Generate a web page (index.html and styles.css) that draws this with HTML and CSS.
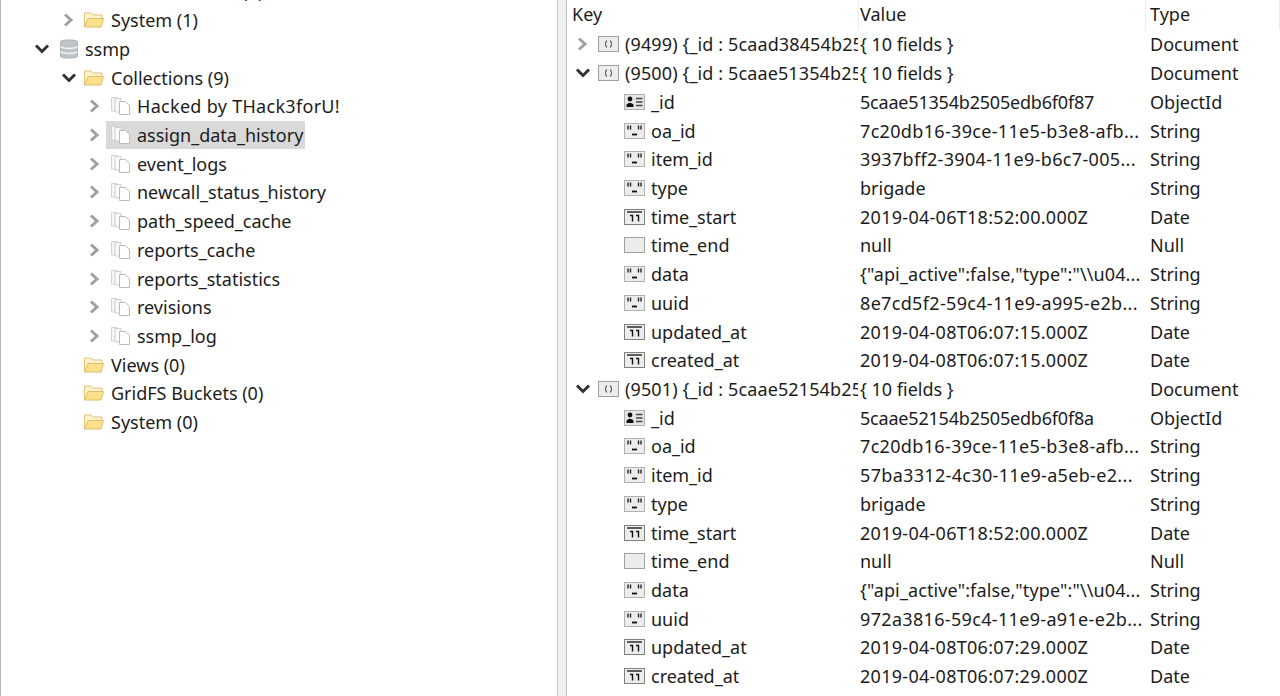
FILE: index.html
```html
<!doctype html>
<html>
<head>
    <meta charset="UTF-8">
    <title>ssmp - Collections</title>
    <link rel="stylesheet" href="styles.css">
</head>

<body>
    <svg class="defs" width="0" height="0">
        <symbol id="i-chev-r" viewBox="0 0 14 16"><path d="M3 2.500 9 8 3 13.500" fill="none" stroke="#a0a0a0" stroke-width="3"/></symbol>
        <symbol id="i-chev-d" viewBox="0 0 16 14"><path d="M2 3.500 8 9.500 14 3.500" fill="none" stroke="#333" stroke-width="3"/></symbol>
        <symbol id="i-folder" viewBox="0 0 22 18">
            <path d="M1.500 16V2H8L10 4H19V7" fill="#fdf3cc" stroke="#dfc27a"/>
            <path d="M1.500 16 5 7.500H20.500L18 16Z" fill="#fce08c" stroke="#e2be68"/>
        </symbol>
        <symbol id="i-db" viewBox="0 0 18 20">
            <path d="M.5 3C.5 .2 17.500 .2 17.500 3V17C17.500 19.800 .5 19.800 .5 17Z" fill="#bcc4c9" stroke="#aab2b7"/>
            <path d="M.5 7.500C3 10 15 10 17.500 7.500M.5 12.500C3 15 15 15 17.500 12.500" fill="none" stroke="#f2f4f5" stroke-width="1.500"/>
        </symbol>
        <symbol id="i-coll" viewBox="0 0 21 20">
            <path d="M1.500 1.500H7V15H1.500Z" fill="#f6f6f6" stroke="#d2d2d2"/>
            <path d="M5 2.500H11V16H5Z" fill="#fafafa" stroke="#cdcdcd"/>
            <path d="M9.500 5.500H15.500L19.500 9.500V18.500H9.500Z" fill="#fff" stroke="#bcbcbc"/>
        </symbol>
        <symbol id="i-doc" viewBox="0 0 21 16">
            <rect x=".5" y=".5" width="20" height="15" fill="#ececec" stroke="#a0a0a0"/>
            <path d="M9 4.500C7.500 4.500 8.500 7.500 7 8 8.500 8.500 7.500 11.500 9 11.500M12 4.500C13.500 4.500 12.500 7.500 14 8 12.500 8.500 13.500 11.500 12 11.500" fill="none" stroke="#333"/>
        </symbol>
        <symbol id="i-oid" viewBox="0 0 21 16">
            <rect x=".5" y=".5" width="20" height="15" fill="#e6e6e6" stroke="#b0b0b0"/>
            <circle cx="6" cy="5" r="2.400" fill="#111"/>
            <path d="M2.500 13V10.500Q6 7 9.500 10.500V13Z" fill="#111"/>
            <path d="M12 4.500H18.500M12 8H18.500M12 11.500H18.500" stroke="#444" stroke-width="1.300"/>
        </symbol>
        <symbol id="i-str" viewBox="0 0 21 16">
            <rect x=".5" y=".5" width="20" height="15" fill="#ececec" stroke="#b0b0b0"/>
            <path d="M4 2.500V6.500M6.500 2.500V6.500M14.500 2.500V6.500M17 2.500V6.500" stroke="#222" stroke-width="1.400"/>
            <path d="M8 11.500H13" stroke="#111" stroke-width="1.800"/>
        </symbol>
        <symbol id="i-date" viewBox="0 0 21 16">
            <rect x=".5" y=".5" width="20" height="15" fill="#ececec" stroke="#808080"/>
            <path d="M3 3H18" stroke="#222" stroke-width="1.400"/>
            <path d="M6 6.500H8.500V12.500M12 6.500H14.500V12.500" fill="none" stroke="#111" stroke-width="1.400"/>
        </symbol>
        <symbol id="i-null" viewBox="0 0 21 16">
            <rect x=".5" y=".5" width="20" height="15" fill="#ececec" stroke="#a0a0a0"/>
        </symbol>
    </svg>

    <div class="app">
        <div class="tree">
            <div class="node lvl-1"><span class="tw"></span><svg class="ic-folder"><use href="#i-folder"/></svg><span class="lbl">GridFS Buckets (1)</span></div>
            <div class="node lvl-1"><span class="tw"><svg class="chev-r"><use href="#i-chev-r"/></svg></span><svg class="ic-folder"><use href="#i-folder"/></svg><span class="lbl">System (1)</span></div>
            <div class="node lvl-0"><span class="tw"><svg class="chev-d"><use href="#i-chev-d"/></svg></span><svg class="ic-db"><use href="#i-db"/></svg><span class="lbl">ssmp</span></div>
            <div class="node lvl-1"><span class="tw"><svg class="chev-d"><use href="#i-chev-d"/></svg></span><svg class="ic-folder"><use href="#i-folder"/></svg><span class="lbl">Collections (9)</span></div>
            <div class="node lvl-2"><span class="tw"><svg class="chev-r"><use href="#i-chev-r"/></svg></span><svg class="ic-coll"><use href="#i-coll"/></svg><span class="lbl wide">Hacked by THack3forU!</span></div>
            <div class="node lvl-2 selected"><span class="tw"><svg class="chev-r"><use href="#i-chev-r"/></svg></span><span class="sel-box"><svg class="ic-coll"><use href="#i-coll"/></svg><span class="lbl">assign_data_history</span></span></div>
            <div class="node lvl-2"><span class="tw"><svg class="chev-r"><use href="#i-chev-r"/></svg></span><svg class="ic-coll"><use href="#i-coll"/></svg><span class="lbl">event_logs</span></div>
            <div class="node lvl-2"><span class="tw"><svg class="chev-r"><use href="#i-chev-r"/></svg></span><svg class="ic-coll"><use href="#i-coll"/></svg><span class="lbl">newcall_status_history</span></div>
            <div class="node lvl-2"><span class="tw"><svg class="chev-r"><use href="#i-chev-r"/></svg></span><svg class="ic-coll"><use href="#i-coll"/></svg><span class="lbl">path_speed_cache</span></div>
            <div class="node lvl-2"><span class="tw"><svg class="chev-r"><use href="#i-chev-r"/></svg></span><svg class="ic-coll"><use href="#i-coll"/></svg><span class="lbl">reports_cache</span></div>
            <div class="node lvl-2"><span class="tw"><svg class="chev-r"><use href="#i-chev-r"/></svg></span><svg class="ic-coll"><use href="#i-coll"/></svg><span class="lbl">reports_statistics</span></div>
            <div class="node lvl-2"><span class="tw"><svg class="chev-r"><use href="#i-chev-r"/></svg></span><svg class="ic-coll"><use href="#i-coll"/></svg><span class="lbl">revisions</span></div>
            <div class="node lvl-2"><span class="tw"><svg class="chev-r"><use href="#i-chev-r"/></svg></span><svg class="ic-coll"><use href="#i-coll"/></svg><span class="lbl">ssmp_log</span></div>
            <div class="node lvl-1"><span class="tw"></span><svg class="ic-folder"><use href="#i-folder"/></svg><span class="lbl">Views (0)</span></div>
            <div class="node lvl-1"><span class="tw"></span><svg class="ic-folder"><use href="#i-folder"/></svg><span class="lbl">GridFS Buckets (0)</span></div>
            <div class="node lvl-1"><span class="tw"></span><svg class="ic-folder"><use href="#i-folder"/></svg><span class="lbl">System (0)</span></div>
        </div>

        <div class="splitter"></div>

        <div class="results">
            <div class="row head"><div class="c-key">Key</div><div class="c-val">Value</div><div class="c-type">Type</div></div>
            <div id="rows"></div>
        </div>
    </div>

    <script src="app.js"></script>
</body>
</html>
```

FILE: styles.css
```css
html, body {
    margin: 0;
    height: 100%;
    overflow: hidden;
    background: #fff;
}
body {
    font-family: "Noto Sans", "Open Sans", sans-serif;
    font-size: 18px;
    color: #1c1c1c;
}
.defs {
    display: block;
}
.app {
    display: flex;
    height: 696px;
    overflow: hidden;
}

/* left tree */
.tree {
    width: 556px;
    flex: none;
    border-left: 1px solid #b5b5b5;
    margin-top: -23px;
}
.node {
    display: flex;
    align-items: center;
    height: 28.72px;
    white-space: nowrap;
}
.lvl-0 { padding-left: 33px; }
.lvl-1 { padding-left: 61px; }
.lvl-2 { padding-left: 87px; }
.tw {
    width: 22px;
    flex: none;
    display: flex;
    align-items: center;
}
.lvl-0 .tw { width: 26px; }
.lvl-1 .tw { width: 21px; }
.lbl {
    margin-left: 6px;
}
.wide {
    letter-spacing: .3px;
}
.sel-box {
    display: flex;
    align-items: center;
    height: 28px;
    background: #d9d9d9;
    padding: 0 2px 0 4px;
    margin-left: -4px;
}
.chev-r { width: 14px; height: 16px; flex: none; }
.chev-d { width: 16px; height: 14px; flex: none; }
.lvl-1 .chev-d { margin-left: -1px; }
.ic-folder { width: 22px; height: 18px; flex: none; }
.ic-db { width: 18px; height: 20px; flex: none; margin-right: 1px; }
.ic-coll { width: 21px; height: 20px; flex: none; }

/* splitter */
.splitter {
    width: 8px;
    flex: none;
    background: #f0f0f0;
    border-left: 1px solid #c4c4c4;
    border-right: 1px solid #c4c4c4;
}

/* right table */
.results {
    flex: 1;
    min-width: 0;
}
.row {
    display: flex;
    align-items: center;
    height: 28.72px;
    white-space: nowrap;
}
.head {
    height: 30px;
}
.head > div {
    height: 100%;
    display: flex;
    align-items: center;
    border-right: 1px solid #ececec;
    box-sizing: border-box;
    padding-bottom: 2px;
}
.c-key {
    width: 292px;
    flex: none;
    padding: 0 1px 0 5px;
    box-sizing: border-box;
    display: flex;
    align-items: center;
}
.c-val {
    width: 287px;
    flex: none;
    padding-left: 1px;
    box-sizing: border-box;
    overflow: hidden;
}
.c-type {
    flex: 1;
    padding-left: 4px;
}
.rtw {
    width: 26px;
    padding-left: 4px;
    box-sizing: border-box;
    flex: none;
    display: flex;
    align-items: center;
}
.rtw .chev-d { margin-left: -1px; }
.ic-type {
    width: 21px;
    height: 16px;
    flex: none;
}
.row .k {
    margin-left: 6px;
    overflow: hidden;
}
.row.doc .k {
    letter-spacing: .12px;
}
.row.field .c-key {
    padding-left: 57px;
}
.v-oid { letter-spacing: -.2px; }
.v-date { letter-spacing: .28px; }
.v-uuid { letter-spacing: .33px; }
.v-json { letter-spacing: .12px; }
```

FILE: app.js
```js
// rows of the results table
const docs = [
    { key: '(9499) {_id : 5caad38454b25', open: false },
    { key: '(9500) {_id : 5caae51354b25', open: true, fields: [
        ['oid', '_id', '5caae51354b2505edb6f0f87', 'ObjectId', 'v-oid'],
        ['str', 'oa_id', '7c20db16-39ce-11e5-b3e8-afb...', 'String', 'v-uuid'],
        ['str', 'item_id', '3937bff2-3904-11e9-b6c7-005...', 'String', 'v-uuid'],
        ['str', 'type', 'brigade', 'String', ''],
        ['date', 'time_start', '2019-04-06T18:52:00.000Z', 'Date', 'v-date'],
        ['null', 'time_end', 'null', 'Null', ''],
        ['str', 'data', '{"api_active":false,"type":"\\\\u04...', 'String', 'v-json'],
        ['str', 'uuid', '8e7cd5f2-59c4-11e9-a995-e2b...', 'String', 'v-uuid'],
        ['date', 'updated_at', '2019-04-08T06:07:15.000Z', 'Date', 'v-date'],
        ['date', 'created_at', '2019-04-08T06:07:15.000Z', 'Date', 'v-date'],
    ] },
    { key: '(9501) {_id : 5caae52154b25', open: true, fields: [
        ['oid', '_id', '5caae52154b2505edb6f0f8a', 'ObjectId', 'v-oid'],
        ['str', 'oa_id', '7c20db16-39ce-11e5-b3e8-afb...', 'String', 'v-uuid'],
        ['str', 'item_id', '57ba3312-4c30-11e9-a5eb-e2...', 'String', 'v-uuid'],
        ['str', 'type', 'brigade', 'String', ''],
        ['date', 'time_start', '2019-04-06T18:52:00.000Z', 'Date', 'v-date'],
        ['null', 'time_end', 'null', 'Null', ''],
        ['str', 'data', '{"api_active":false,"type":"\\\\u04...', 'String', 'v-json'],
        ['str', 'uuid', '972a3816-59c4-11e9-a91e-e2b...', 'String', 'v-uuid'],
        ['date', 'updated_at', '2019-04-08T06:07:29.000Z', 'Date', 'v-date'],
        ['date', 'created_at', '2019-04-08T06:07:29.000Z', 'Date', 'v-date'],
    ] },
];

function icon(name, cls) {
    return `<svg class="${cls}"><use href="#i-${name}"/></svg>`;
}

let html = '';
docs.forEach(doc => {
    const chev = doc.open ? icon('chev-d', 'chev-d') : icon('chev-r', 'chev-r');
    html += `<div class="row doc"><div class="c-key"><span class="rtw">${chev}</span>${icon('doc', 'ic-type')}<span class="k">${doc.key}</span></div><div class="c-val">{ 10 fields }</div><div class="c-type">Document</div></div>`;
    (doc.fields || []).forEach(f => {
        html += `<div class="row field"><div class="c-key">${icon(f[0], 'ic-type')}<span class="k">${f[1]}</span></div><div class="c-val ${f[4]}">${f[2]}</div><div class="c-type">${f[3]}</div></div>`;
    });
});
document.getElementById('rows').innerHTML = html;
```
